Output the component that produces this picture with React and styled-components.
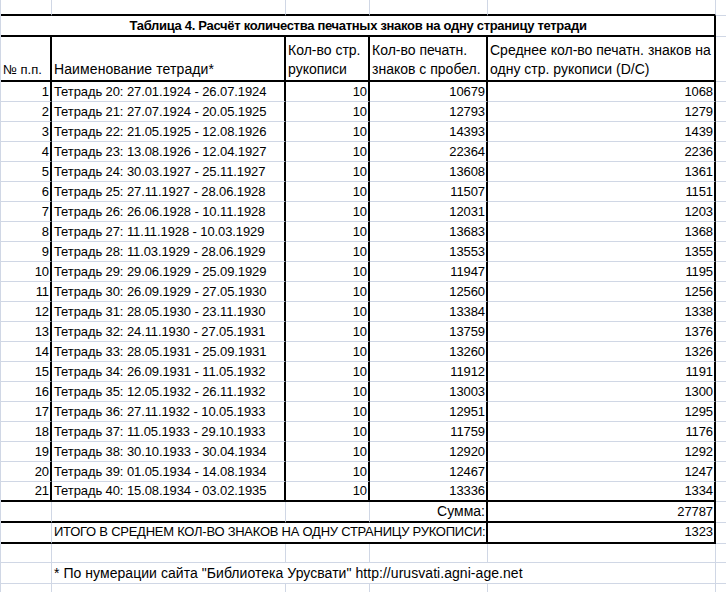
import React from 'react'
import styled, { createGlobalStyle } from 'styled-components'

const GRID = '#d0d7e5'
const INK = '#000'

const GlobalStyle = createGlobalStyle`
  html, body {
    margin: 0;
    padding: 0;
    background: #fff;
  }
  body {
    font-family: "Liberation Sans", Arial, sans-serif;
    font-size: 13px;
    color: ${INK};
  }
`

const Sheet = styled.div`
  display: grid;
  grid-template-columns: 51px 234px 84px 118px 228px 1fr;
  width: 726px;
  height: 592px;
  overflow: hidden;
  border-left: 1px solid ${GRID};
  box-sizing: border-box;
`

const line = (v) =>
  v === 'thick' ? `2px solid ${INK}` : v === 'none' ? '0 solid transparent' : `1px solid ${GRID}`

const Cell = styled.div`
  box-sizing: border-box;
  height: ${(p) => p.$h}px;
  grid-column: ${(p) => (p.$span ? `span ${p.$span}` : 'auto')};
  border-right: ${(p) => line(p.$r)};
  border-bottom: ${(p) => line(p.$b)};
  display: flex;
  align-items: flex-end;
  justify-content: ${(p) =>
    p.$align === 'right' ? 'flex-end' : p.$align === 'center' ? 'center' : 'flex-start'};
  padding: 0 1px ${(p) => p.$pb ?? 1}px 2px;
  font-size: ${(p) => p.$size ?? 13}px;
  font-weight: ${(p) => (p.$bold ? 700 : 400)};
  letter-spacing: ${(p) => p.$ls ?? -0.1}px;
  line-height: 17px;
  white-space: nowrap;
  overflow: hidden;
`

const HeadText = styled.div`
  line-height: 19px;
  white-space: nowrap;
`

const rows = [
  ['20', '27.01.1924', '26.07.1924', 10679, 1068],
  ['21', '27.07.1924', '20.05.1925', 12793, 1279],
  ['22', '21.05.1925', '12.08.1926', 14393, 1439],
  ['23', '13.08.1926', '12.04.1927', 22364, 2236],
  ['24', '30.03.1927', '25.11.1927', 13608, 1361],
  ['25', '27.11.1927', '28.06.1928', 11507, 1151],
  ['26', '26.06.1928', '10.11.1928', 12031, 1203],
  ['27', '11.11.1928', '10.03.1929', 13683, 1368],
  ['28', '11.03.1929', '28.06.1929', 13553, 1355],
  ['29', '29.06.1929', '25.09.1929', 11947, 1195],
  ['30', '26.09.1929', '27.05.1930', 12560, 1256],
  ['31', '28.05.1930', '23.11.1930', 13384, 1338],
  ['32', '24.11.1930', '27.05.1931', 13759, 1376],
  ['33', '28.05.1931', '25.09.1931', 13260, 1326],
  ['34', '26.09.1931', '11.05.1932', 11912, 1191],
  ['35', '12.05.1932', '26.11.1932', 13003, 1300],
  ['36', '27.11.1932', '10.05.1933', 12951, 1295],
  ['37', '11.05.1933', '29.10.1933', 11759, 1176],
  ['38', '30.10.1933', '30.04.1934', 12920, 1292],
  ['39', '01.05.1934', '14.08.1934', 12467, 1247],
  ['40', '15.08.1934', '03.02.1935', 13336, 1334],
]

export default function App() {
  return (
    <>
      <GlobalStyle />
      <Sheet>
        {/* empty row above the table */}
        {[0, 1, 2, 3, 4].map((i) => (
          <Cell key={'e' + i} $h={16} $b="thick" />
        ))}
        <Cell $h={16} $r="none" />

        {/* title */}
        <Cell $h={21} $span={5} $r="thick" $b="thick" $align="center" $bold $ls={-0.3} $pb={1}>
          Таблица 4. Расчёт количества печатных знаков на одну страницу тетради
        </Cell>
        <Cell $h={21} $r="none" />

        {/* header */}
        <Cell $h={45} $r="thick" $b="thick" $ls={0}>
          <HeadText>№ п.п.</HeadText>
        </Cell>
        <Cell $h={45} $r="thick" $b="thick" $size={14} $ls={0.1}>
          <HeadText>Наименование тетради*</HeadText>
        </Cell>
        <Cell $h={45} $r="thick" $b="thick" $size={14} $ls={0}>
          <HeadText>
            Кол-во стр.
            <br />
            рукописи
          </HeadText>
        </Cell>
        <Cell $h={45} $r="thick" $b="thick" $size={14} $ls={0}>
          <HeadText>
            Кол-во печатн.
            <br />
            знаков с пробел.
          </HeadText>
        </Cell>
        <Cell $h={45} $r="thick" $b="thick" $size={14} $ls={0}>
          <HeadText>
            Среднее кол-во печатн. знаков на
            <br />
            одну стр. рукописи (D/C)
          </HeadText>
        </Cell>
        <Cell $h={45} $r="none" />

        {/* data */}
        {rows.map(([n, from, to, chars, avg], i) => {
          const b = i === rows.length - 1 ? 'thick' : 'grid'
          return (
            <React.Fragment key={n}>
              <Cell $h={20} $r="thick" $b={b} $align="right">{i + 1}</Cell>
              <Cell $h={20} $r="thick" $b={b}>
                Тетрадь {n}: {from} - {to}
              </Cell>
              <Cell $h={20} $r="thick" $b={b} $align="right">10</Cell>
              <Cell $h={20} $r="thick" $b={b} $align="right">{chars}</Cell>
              <Cell $h={20} $r="thick" $b={b} $align="right">{avg}</Cell>
              <Cell $h={20} $r="none" />
            </React.Fragment>
          )
        })}

        {/* sum */}
        <Cell $h={21} $b="thick" />
        <Cell $h={21} $b="thick" />
        <Cell $h={21} $b="thick" />
        <Cell $h={21} $r="thick" $b="thick" $align="right" $size={14} $ls={0}>Сумма:</Cell>
        <Cell $h={21} $r="thick" $b="thick" $align="right">27787</Cell>
        <Cell $h={21} $r="none" />

        {/* average */}
        <Cell $h={21} $b="thick" />
        <Cell $h={21} $span={3} $r="thick" $b="thick" $pb={2} $ls={-0.25} $align="left">
          ИТОГО В СРЕДНЕМ КОЛ-ВО ЗНАКОВ НА ОДНУ СТРАНИЦУ РУКОПИСИ:
        </Cell>
        <Cell $h={21} $r="thick" $b="thick" $align="right" $pb={2}>1323</Cell>
        <Cell $h={21} $r="none" />

        {/* blank */}
        {[0, 1, 2, 3, 4].map((i) => (
          <Cell key={'b' + i} $h={19} />
        ))}
        <Cell $h={19} $r="none" />

        {/* note */}
        <Cell $h={21} />
        <Cell $h={21} $span={4} $size={14} $ls={0.05}>
          * По нумерации сайта "Библиотека Урусвати" http://urusvati.agni-age.net
        </Cell>
        <Cell $h={21} $r="none" />

        {[0, 1, 2, 3, 4].map((i) => (
          <Cell key={'l' + i} $h={20} />
        ))}
        <Cell $h={20} $r="none" />
      </Sheet>
    </>
  )
}
